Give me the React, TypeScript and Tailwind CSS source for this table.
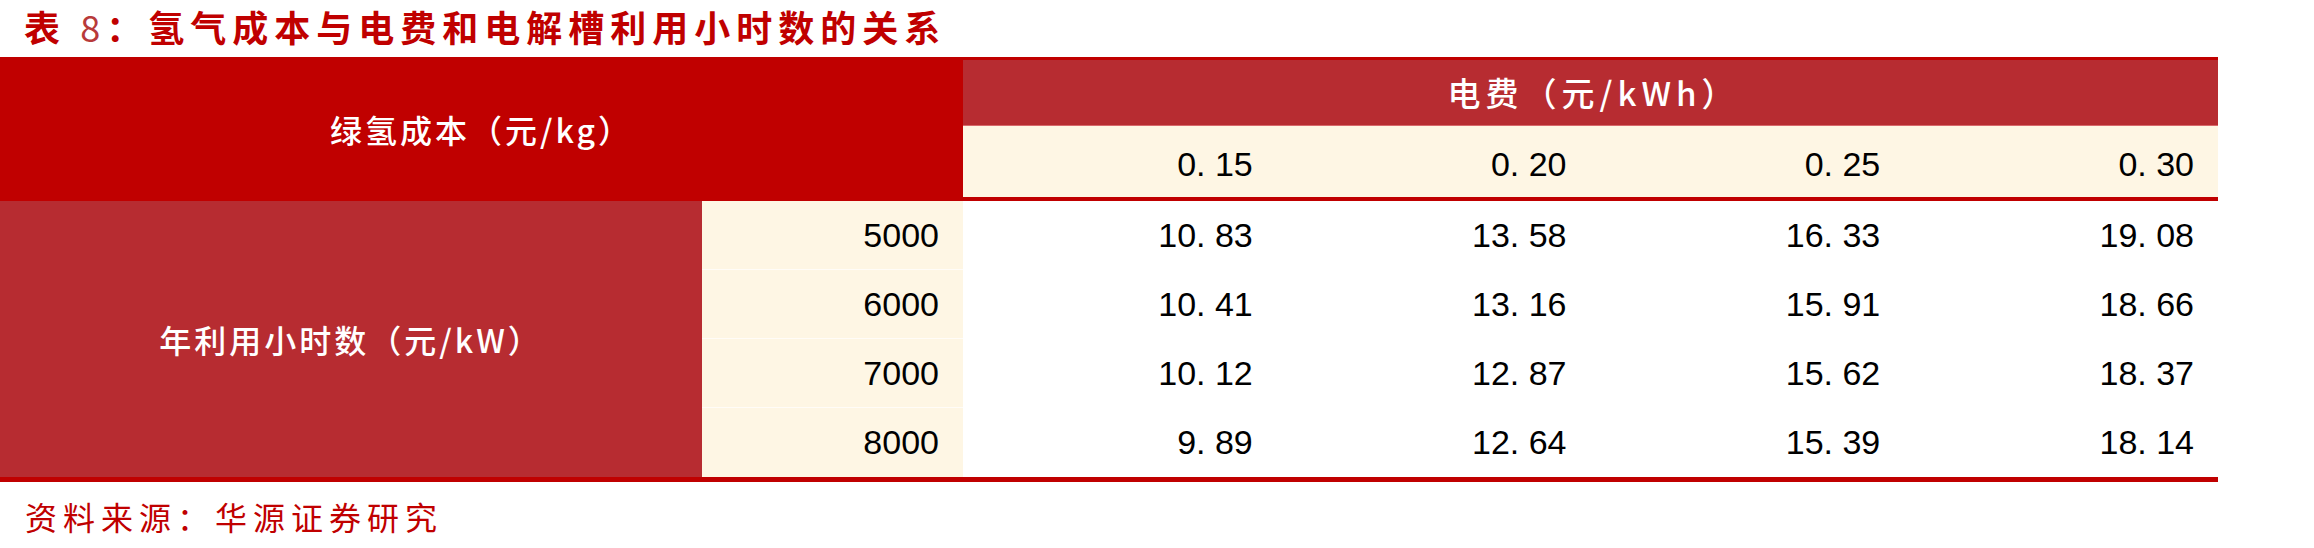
const cn = "font-['Noto_Sans_CJK_SC',sans-serif]";
const num = "font-['Liberation_Sans',Arial,sans-serif] text-[34px] text-black";

const prices = ["0. 15", "0. 20", "0. 25", "0. 30"];

const rows = [
  { hours: "5000", vals: ["10. 83", "13. 58", "16. 33", "19. 08"] },
  { hours: "6000", vals: ["10. 41", "13. 16", "15. 91", "18. 66"] },
  { hours: "7000", vals: ["10. 12", "12. 87", "15. 62", "18. 37"] },
  { hours: "8000", vals: ["9. 89", "12. 64", "15. 39", "18. 14"] },
];

export default function App() {
  return (
    <div className="h-[548px] w-[2314px] bg-white">
      {/* title */}
      <div
        className={`${cn} h-[57px] pl-[24px] pt-[1px] text-[36px] leading-[50px] font-bold tracking-[6px] text-[#c00000]`}
      >
        表 <span className="font-normal text-[#b83a3a]">8</span>：氢气成本与电费和电解槽利用小时数的关系
      </div>

      <div className="w-[2218px] border-t-[3px] border-[#c00000]">
        {/* header */}
        <div className="grid grid-cols-[963px_1fr] grid-rows-[65px_72px]">
          <div
            className={`${cn} row-span-2 flex items-center justify-center bg-[#c00000] text-[32px] font-medium tracking-[3px] text-white`}
          >
            绿氢成本（元/kg）
          </div>
          <div
            className={`${cn} flex items-center justify-center bg-[#b72c31] pl-[6px] text-[33px] font-medium tracking-[5px] text-white`}
          >
            电费（元/kWh）
          </div>
          <div className="grid grid-cols-4 border-t border-[#d8686b] bg-[#fef6e4]">
            {prices.map((p) => (
              <div key={p} className={`${num} flex items-center justify-end pr-[24px] pt-[6px]`}>
                {p}
              </div>
            ))}
          </div>
        </div>

        <div className="h-[4px] bg-[#c00000]" />

        {/* body */}
        <div className="grid grid-cols-[702px_261px_repeat(4,minmax(0,1fr))] grid-rows-[repeat(4,69px)]">
          <div
            className={`${cn} row-span-4 flex items-center justify-center bg-[#b72c31] text-[32px] font-medium tracking-[3px] text-white`}
            style={{ gridColumn: 1, gridRow: "1 / span 4" }}
          >
            年利用小时数（元/kW）
          </div>
          {rows.map((r, i) => (
            <div key={r.hours} className="contents">
              <div
                className={`${num} flex items-center justify-end bg-[#fef6e4] pr-[24px] ${
                  i < 3 ? "border-b border-white/70" : ""
                }`}
              >
                {r.hours}
              </div>
              {r.vals.map((v, j) => (
                <div key={j} className={`${num} flex items-center justify-end pr-[24px]`}>
                  {v}
                </div>
              ))}
            </div>
          ))}
        </div>

        <div className="h-[5px] bg-[#c00000]" />
      </div>

      {/* source */}
      <div
        className={`${cn} pl-[25px] pt-[14px] text-[32px] leading-[40px] tracking-[6px] text-[#c00000]`}
      >
        资料来源：华源证券研究
      </div>
    </div>
  );
}
